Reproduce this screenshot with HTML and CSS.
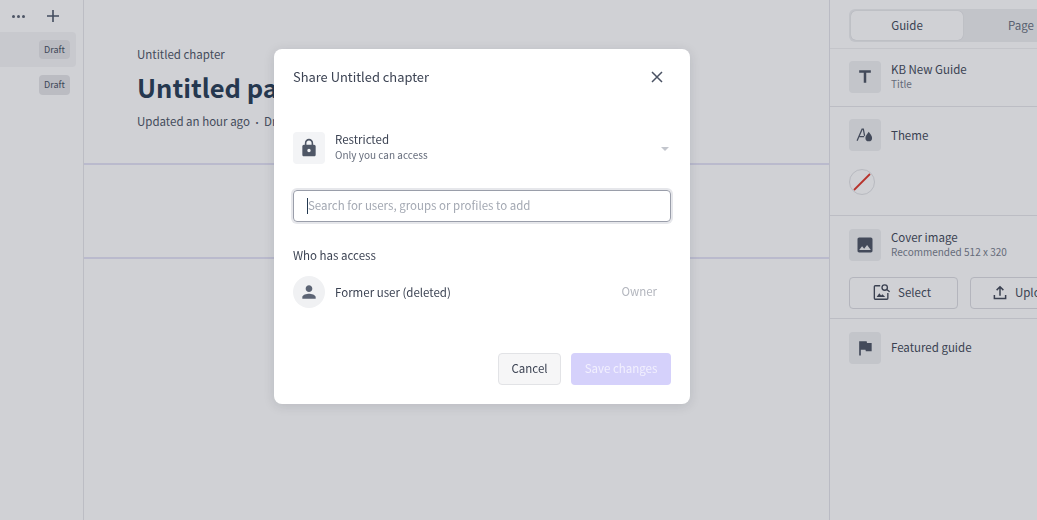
FILE: index.html
```html
<!DOCTYPE html>
<html>
<head>
  <meta charset="UTF-8">
  <title>Share Untitled chapter</title>
  <link rel="stylesheet" href="styles.css">
</head>
<body>
  <div class="app">
    <aside class="sidebar">
      <div class="sidebar-tools">
        <span class="dots"><i></i><i></i><i></i></span>
        <svg class="plus" viewBox="0 0 14 14"><path d="M7 1v12M1 7h12"/></svg>
      </div>
      <div class="side-row side-row-active"><span class="badge">Draft</span></div>
      <div class="side-row"><span class="badge">Draft</span></div>
    </aside>

    <main class="content">
      <header class="page-head">
        <div class="chapter">Untitled chapter</div>
        <h1>Untitled page</h1>
        <div class="meta">Updated an hour ago <span class="sep">•</span> Draft</div>
      </header>
      <div class="band"></div>
    </main>

    <aside class="panel">
      <div class="tabs-wrap">
        <div class="tabs">
          <div class="tab tab-active">Guide</div>
          <div class="tab">Page</div>
        </div>
      </div>

      <section class="panel-section section-title">
        <div class="setting">
          <span class="tile"><svg viewBox="0 0 24 24"><path d="M5 4v3h5.5v12h3V7H19V4z"/></svg></span>
          <div class="setting-text">
            <div class="setting-name">KB New Guide</div>
            <div class="setting-sub">Title</div>
          </div>
        </div>
      </section>

      <section class="panel-section section-theme">
        <div class="setting">
          <span class="tile">
            <svg viewBox="0 0 24 24">
              <path class="line thin" d="M2.500 19 8.500 5h1.500l1.500 8M5.500 14h5.500"/>
              <path d="M16.500 8c2 2.800 4 4.800 4 7.500a4 4 0 0 1-8 0C12.500 12.800 14.500 10.800 16.500 8z"/>
            </svg>
          </span>
          <div class="setting-name">Theme</div>
        </div>
        <span class="swatch"><svg viewBox="0 0 24 24"><path d="M4 20 20 4"/></svg></span>
      </section>

      <section class="panel-section section-cover">
        <div class="setting">
          <span class="tile"><svg viewBox="0 0 24 24"><path d="M21 19V5c0-1.100-.9-2-2-2H5c-1.100 0-2 .9-2 2v14c0 1.100.9 2 2 2h14c1.100 0 2-.9 2-2zM8.500 13.500l2.500 3.010L14.500 12l4.500 6H5l3.500-4.500z"/></svg></span>
          <div class="setting-text">
            <div class="setting-name">Cover image</div>
            <div class="setting-sub">Recommended 512 x 320</div>
          </div>
        </div>
        <div class="cover-actions">
          <button class="btn btn-panel btn-select">
            <svg viewBox="0 0 20 20">
              <path class="line thin" d="M8 3H2.500a1 1 0 0 0-1 1v13a1 1 0 0 0 1 1h13a1 1 0 0 0 1-1v-6"/>
              <path d="M4 15.500 7 11.500l2 2.500 1.500-1.500 3 3z"/>
              <circle class="line thin" cx="13" cy="5" r="3"/>
              <path class="line thin" d="m15.200 7.200 3.300 2.600"/>
            </svg>
            Select
          </button>
          <button class="btn btn-panel btn-upload">
            <svg viewBox="0 0 24 24"><path class="line" d="M12 17V5M7.500 9.500 12 5l4.500 4.500M4.500 16v4.500h15V16"/></svg>
            Upload
          </button>
        </div>
      </section>

      <section class="panel-section section-featured">
        <div class="setting">
          <span class="tile"><svg viewBox="0 0 24 24"><path d="M14.400 6 14 4H5v17h2v-7h5.600l.4 2h7V6z"/></svg></span>
          <div class="setting-name setting-name-up">Featured guide</div>
        </div>
      </section>
    </aside>
  </div>

  <div class="overlay"></div>

  <div class="modal">
    <div class="modal-head">
      <h2>Share Untitled chapter</h2>
      <svg class="close" viewBox="0 0 12 12"><path d="m1 1 10 10M11 1 1 11"/></svg>
    </div>

    <div class="access-row">
      <span class="tile tile-light"><svg viewBox="0 0 24 24"><path d="M18 8h-1V6c0-2.760-2.240-5-5-5S7 3.240 7 6v2H6c-1.100 0-2 .9-2 2v10c0 1.100.9 2 2 2h12c1.100 0 2-.9 2-2V10c0-1.100-.9-2-2-2zm-6 9c-1.100 0-2-.9-2-2s.9-2 2-2 2 .9 2 2-.9 2-2 2zm3.100-9H8.900V6c0-1.710 1.390-3.100 3.100-3.100 1.710 0 3.100 1.390 3.100 3.100v2z"/></svg></span>
      <div class="access-text">
        <div class="access-name">Restricted</div>
        <div class="access-sub">Only you can access</div>
      </div>
      <span class="caret"></span>
    </div>

    <div class="search">
      <span class="cursor"></span>
      <span class="placeholder">Search for users, groups or profiles to add</span>
    </div>

    <h3>Who has access</h3>
    <div class="user-row">
      <span class="avatar"><svg viewBox="0 0 24 24"><path d="M12 12c2.210 0 4-1.790 4-4s-1.790-4-4-4-4 1.790-4 4 1.790 4 4 4zm0 2c-2.670 0-8 1.340-8 4v2h16v-2c0-2.660-5.330-4-8-4z"/></svg></span>
      <span class="user-name">Former user (deleted)</span>
      <span class="role">Owner</span>
    </div>

    <div class="modal-foot">
      <button class="btn btn-cancel">Cancel</button>
      <button class="btn btn-save">Save changes</button>
    </div>
  </div>
</body>
</html>
```

FILE: styles.css
```css
* {
  box-sizing: border-box;
}
html, body {
  margin: 0;
  height: 100%;
  overflow: hidden;
}
body {
  font-family: "Noto Sans CJK SC", "Noto Sans", sans-serif;
  font-size: 11.500px;
  line-height: 16px;
  color: #454c5b;
  background: #fff;
}
svg {
  display: block;
  fill: currentColor;
}
svg .line {
  fill: none;
  stroke: currentColor;
  stroke-width: 2;
}
svg .thin {
  stroke-width: 1.500;
}
.app {
  display: flex;
  width: 1037px;
  height: 520px;
}

/* left nav */
.sidebar {
  flex: 0 0 84px;
  border-right: 1px solid #e6e6ea;
  background: #fff;
}
.sidebar-tools {
  display: flex;
  align-items: center;
  height: 32px;
  padding: 0 0 0 12px;
}
.dots {
  display: flex;
  gap: 2px;
  width: 34px;
}
.dots i {
  width: 3px;
  height: 3px;
  border-radius: 50%;
  background: #5c6474;
}
.plus {
  width: 14px;
  height: 14px;
  fill: none;
  stroke: #4f5a6c;
  stroke-width: 1.6;
}
.side-row {
  display: flex;
  justify-content: flex-end;
  align-items: center;
  width: 76px;
  height: 35px;
  padding-right: 6px;
  border-radius: 0 4px 4px 0;
}
.side-row-active {
  background: #f6f6f7;
  margin-bottom: 8px;
}
.side-row + .side-row {
  height: 20px;
}
.badge {
  display: block;
  width: 31px;
  height: 19px;
  background: #e5e5e8;
  border-radius: 4px;
  font-size: 9px;
  line-height: 19px;
  text-align: center;
  color: #4a5263;
}
.side-row + .side-row .badge {
  height: 20px;
  line-height: 20px;
}

/* page */
.content {
  flex: 1;
  min-width: 0;
  background: #fff;
}
.page-head {
  height: 165px;
  padding: 46px 0 0 53px;
  border-bottom: 2px solid #e4e3f6;
}
.chapter {
  color: #505868;
}
h1 {
  margin: 7px 0 8px;
  font-size: 25.500px;
  line-height: 36px;
  font-weight: 700;
  color: #2a4058;
  white-space: nowrap;
}
.meta {
  color: #505868;
  white-space: nowrap;
}
.sep {
  font-size: 9px;
}
.band {
  height: 94px;
  border-bottom: 2px solid #e4e3f6;
}

/* right panel */
.panel {
  flex: 0 0 208px;
  overflow: hidden;
  background: #fff;
  border-left: 1px solid #e4e4ea;
}
.tabs-wrap {
  height: 49px;
  padding: 9px 0 0 19px;
  border-bottom: 1px solid #f0f0f2;
}
.tabs {
  display: flex;
  width: 260px;
  height: 33px;
  padding: 2px;
  border-radius: 6px;
  background: #eeeff1;
}
.tab {
  flex: 0 0 112px;
  line-height: 29px;
  text-align: center;
  color: #6b7280;
  white-space: nowrap;
}
.tab + .tab {
  padding-left: 4px;
}
.tab-active {
  background: #fff;
  border-radius: 5px;
  color: #454c5b;
  box-shadow: 0 0 1px rgba(20, 25, 45, 0.2);
}
.panel-section {
  padding: 12px 0 0 19px;
  border-bottom: 1px solid #e6e6ea;
}
.section-title {
  height: 58px;
}
.section-theme {
  height: 109px;
}
.section-cover {
  height: 103px;
  padding-top: 13px;
}
.section-featured {
  padding-top: 13px;
  border-bottom: 0;
}
.setting {
  display: flex;
  align-items: center;
  gap: 10px;
  white-space: nowrap;
}
.setting-text, .access-text, .setting-name-up {
  padding-bottom: 2px;
}
.tile {
  flex: none;
  display: flex;
  align-items: center;
  justify-content: center;
  width: 32px;
  height: 32px;
  border-radius: 4px;
  background: #eff0f2;
  color: #4f5766;
}
.tile svg {
  width: 20px;
  height: 20px;
}
.setting-sub {
  font-size: 10px;
  line-height: 14px;
  color: #7a818e;
}
.swatch {
  display: block;
  width: 26px;
  height: 26px;
  margin-top: 18px;
  border: 1px solid #e2e3e6;
  border-radius: 50%;
}
.swatch svg {
  width: 24px;
  height: 24px;
  fill: none;
  stroke: #e0392b;
  stroke-width: 1.800;
}
.cover-actions {
  display: flex;
  gap: 12px;
  margin-top: 16px;
}
.btn {
  display: flex;
  align-items: center;
  justify-content: center;
  height: 32px;
  padding: 0 0 2px;
  border-radius: 4px;
  font-family: inherit;
  font-size: 11.500px;
  white-space: nowrap;
  cursor: pointer;
}
.btn-panel {
  flex: none;
  gap: 7px;
  background: transparent;
  border: 1px solid #dcdde1;
  color: #454c5b;
}
.btn-panel svg {
  width: 18px;
  height: 18px;
}
.btn-select {
  width: 109px;
  padding-right: 3px;
}
.btn-upload {
  width: 109px;
  gap: 6px;
  padding-right: 4px;
}

/* dim layer and dialog */
.overlay {
  position: fixed;
  inset: 0;
  background: rgba(20, 25, 45, 0.2);
}
.modal {
  position: absolute;
  left: 274px;
  top: 49px;
  width: 416px;
  height: 355px;
  padding: 0 19px;
  border-radius: 8px;
  background: #fff;
  box-shadow: 0 2px 12px rgba(20, 25, 45, 0.12);
}
.modal-head {
  display: flex;
  align-items: center;
  justify-content: space-between;
  height: 56px;
  padding: 0 8px 0 0;
}
h2 {
  margin: 0;
  font-size: 12.900px;
  font-weight: 400;
  color: #3c4353;
}
.close {
  width: 12px;
  height: 12px;
  fill: none;
  stroke: #4a5263;
  stroke-width: 1.500;
}
.access-row {
  display: flex;
  align-items: center;
  gap: 10px;
  margin-top: 27px;
}
.tile-light {
  background: #f3f4f6;
}
.access-text {
  flex: 1;
}
.access-name {
  line-height: 15px;
  color: #3c4353;
}
.access-sub {
  font-size: 10px;
  line-height: 15px;
  color: #666d7c;
}
.caret {
  width: 0;
  height: 0;
  margin: 2px 2px 0 0;
  border-left: 4px solid transparent;
  border-right: 4px solid transparent;
  border-top: 4px solid #c3c6cd;
}
.search {
  display: flex;
  align-items: center;
  height: 32px;
  margin-top: 26px;
  padding-left: 13px;
  border: 1px solid #9a9eaa;
  border-radius: 4px;
  box-shadow: 0 0 0 2px #e6e7eb;
}
.cursor {
  width: 1px;
  height: 16px;
  background: #22384f;
}
.placeholder {
  padding-bottom: 2px;
  color: #a3a8b2;
}
h3 {
  margin: 25px 0 0;
  font-size: 11.500px;
  font-weight: 400;
  color: #3c4353;
}
.user-row {
  display: flex;
  align-items: center;
  gap: 10px;
  margin-top: 13px;
}
.avatar {
  display: flex;
  align-items: center;
  justify-content: center;
  width: 32px;
  height: 32px;
  border-radius: 50%;
  background: #f0f1f3;
  color: #5c6474;
}
.avatar svg {
  width: 20px;
  height: 20px;
}
.user-name {
  flex: 1;
  color: #3c4353;
}
.role {
  padding: 0 14px 2px 0;
  color: #b3b6be;
}
.modal-foot {
  display: flex;
  justify-content: flex-end;
  gap: 10px;
  margin-top: 45px;
}
.btn-cancel {
  width: 63px;
  background: #f6f6f7;
  border: 1px solid #e2e3e6;
  color: #3c4353;
}
.btn-save {
  width: 100px;
  background: #d5d1fb;
  border: 0;
  color: #f2f0fe;
}
```
